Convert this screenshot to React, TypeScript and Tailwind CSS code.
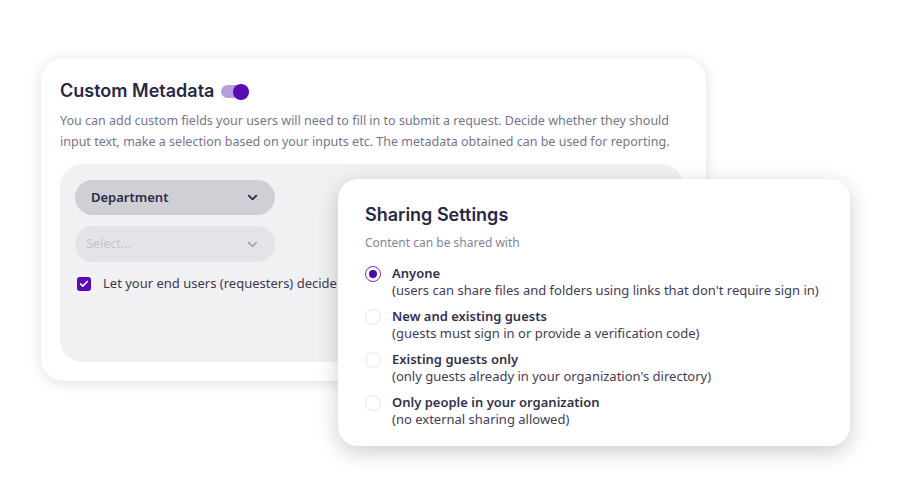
import { ChevronDown, Check } from "lucide-react";

const options = [
  {
    title: "Anyone",
    sub: "(users can share files and folders using links that don't require sign in)",
    on: true,
  },
  {
    title: "New and existing guests",
    sub: "(guests must sign in or provide a verification code)",
    on: false,
  },
  {
    title: "Existing guests only",
    sub: "(only guests already in your organization's directory)",
    on: false,
  },
  {
    title: "Only people in your organization",
    sub: "(no external sharing allowed)",
    on: false,
  },
];

function Radio({ on }: { on: boolean }) {
  if (on) {
    return (
      <span className="flex h-[16px] w-[16px] shrink-0 items-center justify-center rounded-full border-[1.5px] border-[#7a2fd0]">
        <span className="block h-[8px] w-[8px] rounded-full bg-[#4b08a8]" />
      </span>
    );
  }
  return <span className="block h-[16px] w-[16px] shrink-0 rounded-full border-[1.5px] border-[#e6e6ea]" />;
}

export default function App() {
  return (
    <div
      className="relative h-[492px] w-[907px] overflow-hidden bg-white pl-[41px] pt-[58px]"
      style={{ fontFamily: '"Noto Sans", "Open Sans", sans-serif' }}
    >
      {/* ===== CUSTOM METADATA ===== */}
      <div className="flex h-[323px] w-[665px] flex-col rounded-[22px] bg-white pl-[19px] pt-[20px] shadow-[0_2px_14px_rgba(0,0,0,0.13)]">
        <div className="flex items-center gap-[7px]">
          <h2 className="text-[18px] font-semibold leading-[26px] text-[#2a2843]" style={{ fontFamily: "Inter, sans-serif" }}>
            Custom Metadata
          </h2>
          <span className="relative mt-[1px] block h-[13px] w-[28px] rounded-full bg-[#b99be0]">
            <span className="absolute right-0 top-[-1.5px] block h-[16px] w-[16px] rounded-full bg-[#5a09b3]" />
          </span>
        </div>

        <p className="mt-[6px] w-[620px] text-[12.5px] leading-[21px] text-[#77758a]">
          You can add custom fields your users will need to fill in to submit a request. Decide whether they should
          input text, make a selection based on your inputs etc. The metadata obtained can be used for reporting.
        </p>

        <div className="mt-[12px] h-[198px] w-[623px] rounded-[22px] bg-[#f1f1f4] pl-[15px] pt-[16px]">
          <div className="flex h-[35px] w-[200px] items-center justify-between rounded-full bg-[#cfcfd6] pl-[16px] pr-[15px]">
            <span className="text-[13px] font-semibold text-[#2d2b45]">Department</span>
            <ChevronDown size={15} strokeWidth={3} className="text-[#2d2b45]" />
          </div>
          <div className="mt-[11px] flex h-[36px] w-[200px] items-center justify-between rounded-full bg-[#e3e3e8] pl-[11px] pr-[15px]">
            <span className="text-[12.5px] text-[#c3c3cb]">Select...</span>
            <ChevronDown size={15} strokeWidth={2.5} className="text-[#a5a5b0]" />
          </div>
          <div className="mt-[12px] flex items-center gap-[12px] pl-[2px]">
            <span className="flex h-[14px] w-[14px] items-center justify-center rounded-[3px] bg-[#5a09b3]">
              <Check size={10} strokeWidth={4} className="text-white" />
            </span>
            <span className="text-[13px] text-[#3a384f]">Let your end users (requesters) decide whether they</span>
          </div>
        </div>
      </div>

      {/* ===== SHARING SETTINGS (overlay) ===== */}
      <div className="absolute left-[338px] top-[179px] h-[267px] w-[512px] rounded-[20px] bg-white pl-[27px] pt-[23px] shadow-[0_6px_22px_rgba(0,0,0,0.2)]">
        <h3 className="text-[18px] font-semibold leading-[26px] text-[#2a2843]" style={{ fontFamily: "Inter, sans-serif" }}>
          Sharing Settings
        </h3>
        <p className="mt-[6px] text-[12px] leading-[18px] text-[#85839a]">Content can be shared with</p>

        <div className="mt-[13px] flex flex-col gap-[9px]">
          {options.map((o) => (
            <div key={o.title} className="flex items-start gap-[11px]">
              <div className="pt-[0.5px]">
                <Radio on={o.on} />
              </div>
              <div className="text-[13px] leading-[17px]">
                <div className="font-semibold text-[#34324a]">{o.title}</div>
                <div className="text-[#3f3d55]">{o.sub}</div>
              </div>
            </div>
          ))}
        </div>
      </div>
    </div>
  );
}
